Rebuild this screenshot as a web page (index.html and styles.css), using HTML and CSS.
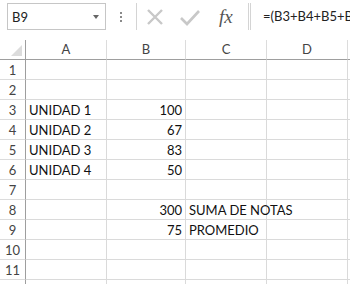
FILE: index.html
```html
<!DOCTYPE html>
<html lang="es">
<head>
  <meta charset="UTF-8">
  <title>Hoja de notas</title>
  <link rel="stylesheet" href="styles.css">
</head>
<body>
  <div class="formula-bar">
    <div class="name-box">
      <span class="name-text">B9</span>
      <span class="name-arrow"></span>
    </div>
    <div class="grip"><span></span><span></span><span></span></div>
    <div class="fx-buttons">
      <svg class="icon" width="20" height="20" viewBox="0 0 20 20">
        <path d="M3 3 L17 17 M17 3 L3 17" stroke="#c8c8c8" stroke-width="2.4" fill="none"/>
      </svg>
      <svg class="icon" width="22" height="20" viewBox="0 0 22 20">
        <path d="M2 11 L8 17 L20 4" stroke="#c8c8c8" stroke-width="2.6" fill="none"/>
      </svg>
      <span class="fx">fx</span>
    </div>
    <div class="formula-input">=(B3+B4+B5+B6)/4</div>
  </div>

  <div class="sheet">
    <div class="corner"><span class="corner-tri"></span></div>
    <div class="col-head">A</div>
    <div class="col-head">B</div>
    <div class="col-head">C</div>
    <div class="col-head">D</div>
    <div class="col-head last"></div>

    <div class="row-head">1</div><div class="cell"></div><div class="cell"></div><div class="cell"></div><div class="cell"></div><div class="cell last"></div>
    <div class="row-head">2</div><div class="cell"></div><div class="cell"></div><div class="cell"></div><div class="cell"></div><div class="cell last"></div>
    <div class="row-head">3</div><div class="cell">UNIDAD 1</div><div class="cell num">100</div><div class="cell"></div><div class="cell"></div><div class="cell last"></div>
    <div class="row-head">4</div><div class="cell">UNIDAD 2</div><div class="cell num">67</div><div class="cell"></div><div class="cell"></div><div class="cell last"></div>
    <div class="row-head">5</div><div class="cell">UNIDAD 3</div><div class="cell num">83</div><div class="cell"></div><div class="cell"></div><div class="cell last"></div>
    <div class="row-head">6</div><div class="cell">UNIDAD 4</div><div class="cell num">50</div><div class="cell"></div><div class="cell"></div><div class="cell last"></div>
    <div class="row-head">7</div><div class="cell"></div><div class="cell"></div><div class="cell"></div><div class="cell"></div><div class="cell last"></div>
    <div class="row-head">8</div><div class="cell"></div><div class="cell num">300</div><div class="cell">SUMA DE NOTAS</div><div class="cell"></div><div class="cell last"></div>
    <div class="row-head">9</div><div class="cell"></div><div class="cell num">75</div><div class="cell">PROMEDIO</div><div class="cell"></div><div class="cell last"></div>
    <div class="row-head">10</div><div class="cell"></div><div class="cell"></div><div class="cell"></div><div class="cell"></div><div class="cell last"></div>
    <div class="row-head">11</div><div class="cell"></div><div class="cell"></div><div class="cell"></div><div class="cell"></div><div class="cell last"></div>
    <div class="row-head"></div><div class="cell"></div><div class="cell"></div><div class="cell"></div><div class="cell"></div><div class="cell last"></div>
  </div>
</body>
</html>
```

FILE: styles.css
```css
/* Spreadsheet view */
body {
  margin: 0;
  background-color: #fff;
  font-family: Lato, "Noto Sans", sans-serif;
  width: 350px;
  height: 284px;
  overflow: hidden;
}

.formula-bar {
  display: flex;
  align-items: stretch;
  height: 27px;
  margin-top: 3px;
  padding-left: 7px;
}

.name-box {
  box-sizing: border-box;
  width: 99px;
  border: 1px solid #c6c6c6;
  display: flex;
  align-items: center;
  justify-content: space-between;
  padding: 0 6px 0 4px;
}

.name-text {
  font-size: 13px;
  color: #222;
}

.name-arrow {
  width: 0;
  height: 0;
  border-left: 3px solid transparent;
  border-right: 3px solid transparent;
  border-top: 4px solid #666;
}

.grip {
  width: 30px;
  display: flex;
  flex-direction: column;
  align-items: center;
  justify-content: center;
  gap: 2px;
}

.grip span {
  width: 2px;
  height: 2px;
  background-color: #8a8a8a;
}

.fx-buttons {
  box-sizing: border-box;
  width: 115px;
  border-left: 1px solid #d4d4d4;
  border-right: 3px double #d4d4d4;
  display: flex;
  align-items: center;
  gap: 14px;
  padding-left: 8px;
}

.fx {
  font-family: "Liberation Serif", serif;
  font-style: italic;
  font-size: 19px;
  color: #555;
  margin-left: 4px;
}

.formula-input {
  flex: 1;
  padding-left: 12px;
  font-size: 13px;
  color: #222;
  white-space: nowrap;
  overflow: hidden;
  line-height: 27px;
}

.sheet {
  margin-top: 10px;
  display: grid;
  grid-template-columns: 26px 81px 79px 81px 81px 10px;
  grid-auto-rows: 20px;
}

.corner,
.col-head,
.row-head,
.cell {
  box-sizing: border-box;
}

.corner {
  border-right: 1px solid #9e9e9e;
  border-bottom: 1px solid #9e9e9e;
  position: relative;
}

.corner-tri {
  position: absolute;
  right: 3px;
  bottom: 3px;
  width: 0;
  height: 0;
  border-left: 11px solid transparent;
  border-bottom: 11px solid #dcdcdc;
}

.col-head {
  border-right: 1px solid #dcdcdc;
  border-bottom: 1px solid #9e9e9e;
  color: #444;
  font-size: 13px;
  text-align: center;
  line-height: 19px;
}

.row-head {
  border-right: 1px solid #9e9e9e;
  border-bottom: 1px solid #dcdcdc;
  color: #444;
  font-size: 13px;
  text-align: center;
  line-height: 21px;
}

.cell {
  border-right: 1px solid #dadada;
  border-bottom: 1px solid #dadada;
  font-size: 13px;
  color: #111;
  line-height: 21px;
  padding: 0 3px;
  white-space: nowrap;
}

.cell.num {
  text-align: right;
}

.last {
  border-right: none;
}
```
